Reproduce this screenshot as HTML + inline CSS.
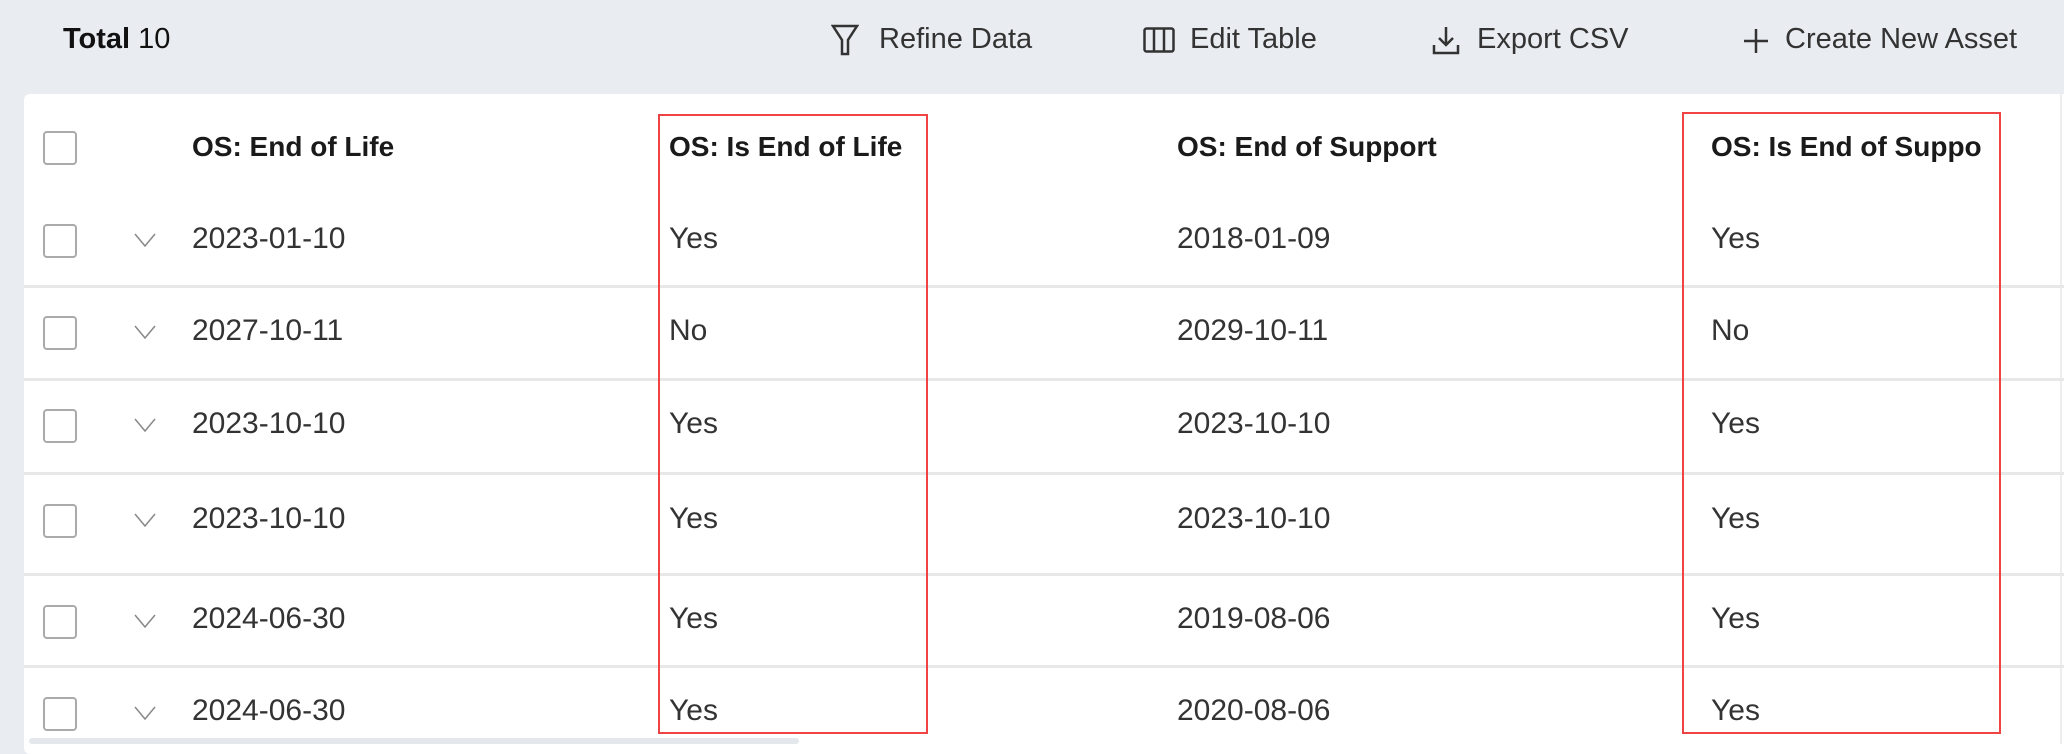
<!DOCTYPE html>
<html><head><meta charset="utf-8"><style>
*{margin:0;padding:0;box-sizing:border-box}
body{width:2064px;height:744px;overflow:hidden;background:#e9ecf1;font-family:"Liberation Sans",sans-serif;position:relative;color:#333}
.a{position:absolute;white-space:nowrap}
.tb{font-size:29px;color:#333;top:23px}
.card{position:absolute;left:24px;top:94px;width:2060px;height:660px;background:#fff;border-radius:6px}
.cb{position:absolute;left:43px;width:34px;height:34px;border:2px solid #aaa;border-radius:4px;background:#fff}
.hd{font-weight:bold;font-size:28px;color:#1a1a1a}
.v{font-size:30px;color:#333}
.sep{position:absolute;left:24px;right:0;height:3px;background:#e8e8e8}
.chev{position:absolute;left:134px;width:22px;height:14px}
.red{position:absolute;border:2.5px solid #f04444}
</style></head><body>
<div class="a tb" style="left:63px;color:#111"><b style="font-weight:600">Total</b> 10</div>
<svg class="a" style="left:831px;top:24px" width="28" height="32" viewBox="0 0 28 32"><path d="M2 2H26L17 16V30H11V16Z" fill="none" stroke="#333" stroke-width="2.5"/></svg>
<div class="a tb" style="left:879px">Refine Data</div>
<svg class="a" style="left:1143px;top:27px" width="32" height="26" viewBox="0 0 32 26"><rect x="1.5" y="1.5" width="29" height="23" rx="2" fill="none" stroke="#333" stroke-width="2.5"/><path d="M11 2V24M21 2V24" stroke="#333" stroke-width="2.5"/></svg>
<div class="a tb" style="left:1190px">Edit Table</div>
<svg class="a" style="left:1432px;top:25px" width="28" height="30" viewBox="0 0 28 30"><path d="M14 2V20M7 13L14 20L21 13M2 20V28H26V20" fill="none" stroke="#333" stroke-width="2.5"/></svg>
<div class="a tb" style="left:1477px">Export CSV</div>
<svg class="a" style="left:1743px;top:28px" width="26" height="26" viewBox="0 0 26 26"><path d="M13 1V25M1 13H25" stroke="#333" stroke-width="2.5"/></svg>
<div class="a tb" style="left:1785px">Create New Asset</div>

<div class="card"></div>
<div class="a" style="left:2060px;top:94px;width:2px;height:650px;background:#eee"></div>

<div class="sep" style="top:285px"></div>
<div class="sep" style="top:378px"></div>
<div class="sep" style="top:472px"></div>
<div class="sep" style="top:573px"></div>
<div class="sep" style="top:665px"></div>
<div class="a" style="left:29px;top:738px;width:770px;height:6px;background:#e4e7ec;border-radius:3px"></div>

<div class="cb" style="top:131px"></div>
<div class="a hd" style="left:192px;top:131px">OS: End of Life</div>
<div class="a hd" style="left:669px;top:131px">OS: Is End of Life</div>
<div class="a hd" style="left:1177px;top:131px">OS: End of Support</div>
<div class="a hd" style="left:1711px;top:131px">OS: Is End of Suppo</div>

<div class="cb" style="top:224px"></div><svg class="chev" style="top:233px" viewBox="0 0 22 14"><path d="M1 1L11 13L21 1" fill="none" stroke="#888" stroke-width="1.5"/></svg>
<div class="a v" style="left:192px;top:222px">2023-01-10</div><div class="a v" style="left:669px;top:222px">Yes</div><div class="a v" style="left:1177px;top:222px">2018-01-09</div><div class="a v" style="left:1711px;top:222px">Yes</div>

<div class="cb" style="top:316px"></div><svg class="chev" style="top:325px" viewBox="0 0 22 14"><path d="M1 1L11 13L21 1" fill="none" stroke="#888" stroke-width="1.5"/></svg>
<div class="a v" style="left:192px;top:314px">2027-10-11</div><div class="a v" style="left:669px;top:314px">No</div><div class="a v" style="left:1177px;top:314px">2029-10-11</div><div class="a v" style="left:1711px;top:314px">No</div>

<div class="cb" style="top:409px"></div><svg class="chev" style="top:418px" viewBox="0 0 22 14"><path d="M1 1L11 13L21 1" fill="none" stroke="#888" stroke-width="1.5"/></svg>
<div class="a v" style="left:192px;top:407px">2023-10-10</div><div class="a v" style="left:669px;top:407px">Yes</div><div class="a v" style="left:1177px;top:407px">2023-10-10</div><div class="a v" style="left:1711px;top:407px">Yes</div>

<div class="cb" style="top:504px"></div><svg class="chev" style="top:513px" viewBox="0 0 22 14"><path d="M1 1L11 13L21 1" fill="none" stroke="#888" stroke-width="1.5"/></svg>
<div class="a v" style="left:192px;top:502px">2023-10-10</div><div class="a v" style="left:669px;top:502px">Yes</div><div class="a v" style="left:1177px;top:502px">2023-10-10</div><div class="a v" style="left:1711px;top:502px">Yes</div>

<div class="cb" style="top:605px"></div><svg class="chev" style="top:614px" viewBox="0 0 22 14"><path d="M1 1L11 13L21 1" fill="none" stroke="#888" stroke-width="1.5"/></svg>
<div class="a v" style="left:192px;top:602px">2024-06-30</div><div class="a v" style="left:669px;top:602px">Yes</div><div class="a v" style="left:1177px;top:602px">2019-08-06</div><div class="a v" style="left:1711px;top:602px">Yes</div>

<div class="cb" style="top:697px"></div><svg class="chev" style="top:706px" viewBox="0 0 22 14"><path d="M1 1L11 13L21 1" fill="none" stroke="#888" stroke-width="1.5"/></svg>
<div class="a v" style="left:192px;top:694px">2024-06-30</div><div class="a v" style="left:669px;top:694px">Yes</div><div class="a v" style="left:1177px;top:694px">2020-08-06</div><div class="a v" style="left:1711px;top:694px">Yes</div>

<div class="red" style="left:658px;top:114px;width:270px;height:620px"></div>
<div class="red" style="left:1682px;top:112px;width:319px;height:622px"></div>
</body></html>
